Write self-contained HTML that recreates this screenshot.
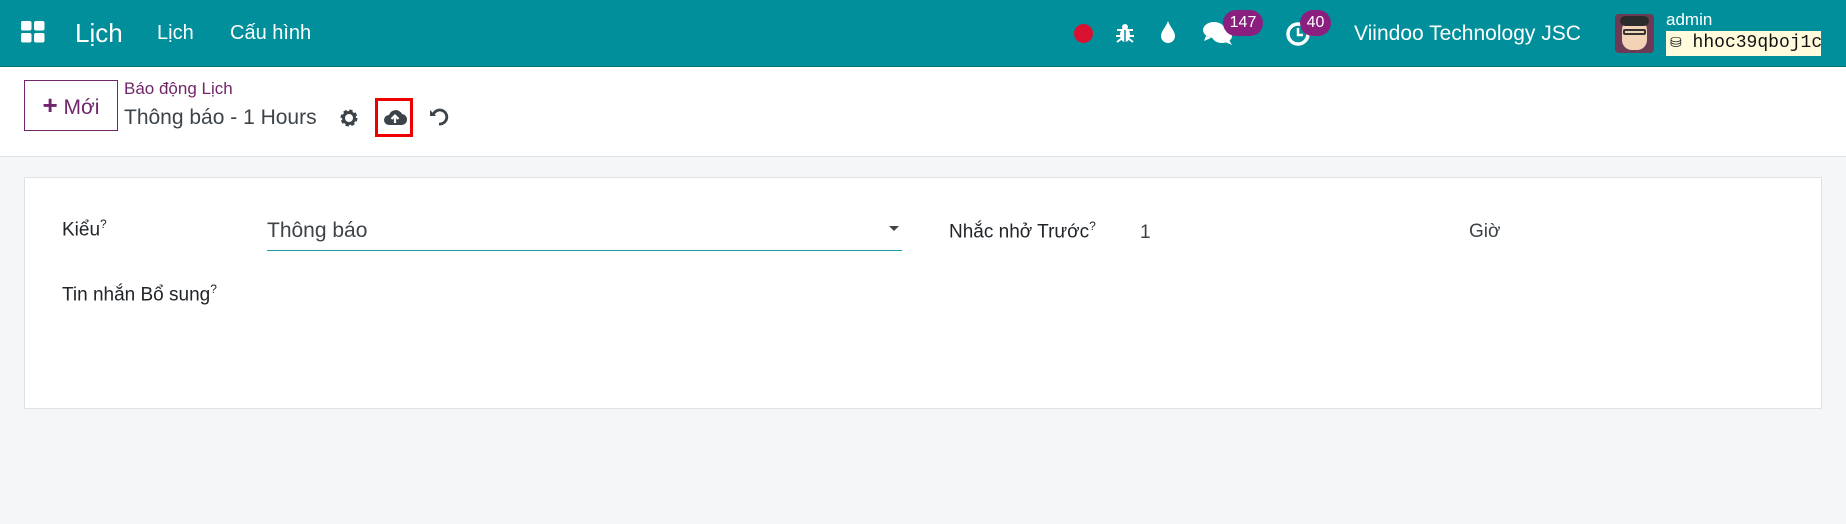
<!DOCTYPE html>
<html><head><meta charset="utf-8"><style>
*{box-sizing:border-box;margin:0;padding:0}
body{width:1846px;height:524px;background:#f5f6f8;font-family:"Liberation Sans","Noto Sans CJK SC",sans-serif;position:relative;overflow:hidden;color:#212529}
.nav{position:absolute;left:0;top:0;width:1846px;height:67px;background:#018f9b;color:#fff;border-bottom:1px solid #00737c}
.a{position:absolute;white-space:nowrap}
.cp{position:absolute;left:0;top:67px;width:1846px;height:90px;background:#fff;border-bottom:1px solid #dee2e6}
.card{position:absolute;left:24px;top:177px;width:1798px;height:232px;background:#fff;border:1px solid #dee2e6}
.badge{position:absolute;background:#8a1f7f;color:#fff;border-radius:13px;font-size:16px;text-align:center;line-height:26px;height:26px}
sup{font-size:12px}
</style></head><body>
<div class="nav">
 <svg class="a" style="left:21px;top:21px" width="24" height="22" viewBox="0 0 24 22"><rect x="0" y="0" width="10.5" height="9.5" rx="2" fill="#fff"/><rect x="13" y="0" width="10.5" height="9.5" rx="2" fill="#fff"/><rect x="0" y="12" width="10.5" height="9.5" rx="2" fill="#fff"/><rect x="13" y="12" width="10.5" height="9.5" rx="2" fill="#fff"/></svg>
 <div class="a" style="left:75px;top:18px;font-size:26px">Lịch</div>
 <div class="a" style="left:157px;top:22px;font-size:20px">Lịch</div>
 <div class="a" style="left:230px;top:22px;font-size:20px">Cấu hình</div>
 <div class="a" style="left:1074px;top:24px;width:19px;height:19px;border-radius:50%;background:#d9102f"></div>
 <svg class="a" style="left:1116px;top:22px" width="18" height="22" viewBox="0 0 18 22" fill="#fff"><ellipse cx="9" cy="13" rx="5" ry="7"/><circle cx="9" cy="5" r="3"/><path d="M1 8h16M0 14h18M1 20l4-3M17 20l-4-3" stroke="#fff" stroke-width="2"/><path d="M9 8v12" stroke="#018f9b" stroke-width="1.5"/></svg>
 <svg class="a" style="left:1160px;top:20px" width="16" height="24" viewBox="0 0 16 24"><path d="M8 1C6 7 1 11 1 16a7 7 0 0014 0C15 11 10 7 8 1z" fill="#fff"/></svg>
 <svg class="a" style="left:1203px;top:20px" width="30" height="28" viewBox="0 0 30 28" fill="#fff"><ellipse cx="11" cy="10" rx="11" ry="8"/><path d="M3 16l-2 5 7-3z"/><ellipse cx="19" cy="16" rx="10" ry="7"/><path d="M26 20l3 5-7-3z"/></svg>
 <div class="badge" style="left:1223px;top:10px;width:40px">147</div>
 <svg class="a" style="left:1285px;top:19px" width="28" height="28" viewBox="0 0 28 28"><circle cx="13" cy="15" r="10" fill="none" stroke="#fff" stroke-width="3.5"/><path d="M13 9v7h5" stroke="#fff" stroke-width="2.5" fill="none"/></svg>
 <div class="badge" style="left:1300px;top:10px;width:31px">40</div>
 <div class="a" style="left:1354px;top:22px;font-size:21px">Viindoo Technology JSC</div>
 <div class="a" style="left:1615px;top:14px;width:39px;height:39px;border-radius:4px;background:#6b3a55;overflow:hidden"><div style="position:absolute;left:7px;top:6px;width:25px;height:30px;border-radius:10px;background:#f3d3b5"></div><div style="position:absolute;left:5px;top:2px;width:29px;height:10px;border-radius:6px;background:#2b2b2b"></div><div style="position:absolute;left:8px;top:15px;width:23px;height:6px;border:2px solid #333;border-radius:2px"></div></div>
 <div class="a" style="left:1666px;top:10px;font-size:17px">admin</div>
 <div class="a" style="left:1666px;top:31px;width:155px;height:25px;background:#fffbdc;color:#111;font-family:'Liberation Mono',monospace;font-size:18px;line-height:25px;padding-left:4px"><span style="font-size:14px">&#9921;</span> hhoc39qboj1c</div>
</div>
<div class="cp">
 <div class="a" style="left:24px;top:13px;width:94px;height:51px;border:1px solid #71256a;color:#71256a;font-size:21px;line-height:49px;text-align:center"><b style="font-size:26px">+</b> Mới</div>
 <div class="a" style="left:124px;top:12px;font-size:17px;color:#71256a">Báo động Lịch</div>
 <div class="a" style="left:124px;top:39px;font-size:21px;color:#3d4449">Thông báo - 1 Hours</div>
 <svg class="a" style="left:339px;top:41px" width="20" height="20" viewBox="0 0 20 20"><circle cx="10" cy="10" r="6.5" fill="none" stroke="#3d4449" stroke-width="4" stroke-dasharray="3 2.1"/><circle cx="10" cy="10" r="5.5" fill="none" stroke="#3d4449" stroke-width="3"/></svg>
 <div class="a" style="left:375px;top:31px;width:38px;height:39px;border:3px solid #e00"></div>
 <svg class="a" style="left:383px;top:40px" width="24" height="20" viewBox="0 0 24 20"><path d="M6 18a5 5 0 010-10 7 7 0 0113-1 5.5 5.5 0 01-1 11z" fill="#3d4449"/><path d="M12 16V9M8.5 12l3.5-3.5 3.5 3.5" stroke="#fff" stroke-width="2.2" fill="none"/></svg>
 <svg class="a" style="left:429px;top:40px" width="20" height="20" viewBox="0 0 20 20"><path d="M4.5 7A7 7 0 1110 17" fill="none" stroke="#3d4449" stroke-width="2.8"/><path d="M1 3v6h6z" fill="#3d4449"/></svg>
</div>
<div class="card">
 <div class="a" style="left:37px;top:39px;font-size:19px">Kiểu<sup>?</sup></div>
 <div class="a" style="left:242px;top:41px;font-size:21px;color:#3d4449">Thông báo</div>
 <div class="a" style="left:242px;top:72px;width:635px;height:1px;background:#1a9ea8"></div>
 <div class="a" style="left:864px;top:40px;width:0;height:0;border-left:5px solid transparent;border-right:5px solid transparent;border-top:5px solid #444;margin-top:8px"></div>
 <div class="a" style="left:924px;top:41px;font-size:19px">Nhắc nhở Trước<sup>?</sup></div>
 <div class="a" style="left:1115px;top:44px;font-size:19px;color:#3d4449">1</div>
 <div class="a" style="left:1444px;top:43px;font-size:19px;color:#3d4449">Giờ</div>
 <div class="a" style="left:37px;top:104px;font-size:19px">Tin nhắn Bổ sung<sup>?</sup></div>
</div>
</body></html>
